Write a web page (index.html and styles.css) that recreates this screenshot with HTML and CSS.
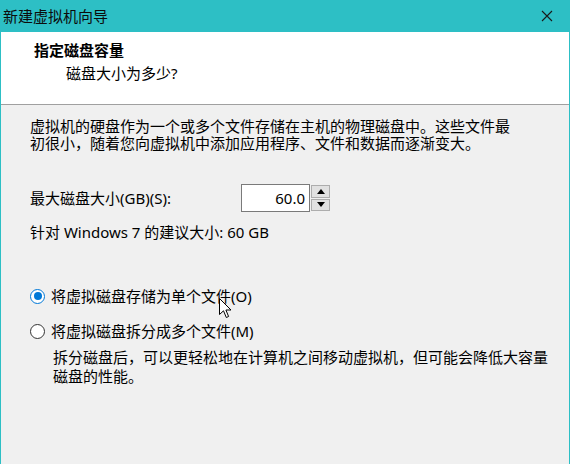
FILE: index.html
```html
<!DOCTYPE html>
<html lang="zh-CN">
<head>
<meta charset="utf-8">
<title>新建虚拟机向导</title>
<link rel="stylesheet" href="styles.css">
</head>
<body>
<div class="window">
  <div class="titlebar">
    <span class="title">新建虚拟机向导</span>
    <span class="close">
      <svg width="12" height="12" viewBox="0 0 12 12"><path d="M1 1 L11 11 M11 1 L1 11" stroke="#1a1a1a" stroke-width="1.1" fill="none"/></svg>
    </span>
  </div>
  <div class="header">
    <div class="h-title">指定磁盘容量</div>
    <div class="h-sub">磁盘大小为多少?</div>
  </div>
  <div class="content">
    <p class="para"><span class="line">虚拟机的硬盘作为一个或多个文件存储在主机的物理磁盘中。这些文件最</span><span class="line">初很小，随着您向虚拟机中添加应用程序、文件和数据而逐渐变大。</span></p>
    <div class="size-row">
      <span class="size-label">最大磁盘大小(GB)(S):</span>
      <div class="spin">
        <div class="spin-input">60.0</div>
        <div class="spin-btns">
          <div class="spin-btn"><svg width="8" height="5" viewBox="0 0 8 5"><path d="M0 5 L4 0 L8 5 Z" fill="#000"/></svg></div>
          <div class="spin-btn"><svg width="8" height="5" viewBox="0 0 8 5"><path d="M0 0 L8 0 L4 5 Z" fill="#000"/></svg></div>
        </div>
      </div>
    </div>
    <div class="recommend">针对 Windows 7 的建议大小: 60 GB</div>
    <div class="radio-row first">
      <span class="radio checked"><span class="dot"></span></span>
      <span class="radio-label">将虚拟磁盘存储为单个文件(O)</span>
      <svg class="cursor" width="13" height="21" viewBox="0 0 13 21"><path d="M0.5 0.5 L0.5 16.5 L4.5 12.8 L7.3 19.5 L9.6 18.5 L6.9 12 L12 12 Z" fill="#fff" stroke="#000" stroke-width="1" stroke-linejoin="miter"/></svg>
    </div>
    <div class="radio-row second">
      <span class="radio"></span>
      <span class="radio-label">将虚拟磁盘拆分成多个文件(M)</span>
    </div>
    <p class="desc"><span class="line">拆分磁盘后，可以更轻松地在计算机之间移动虚拟机，但可能会降低大容量</span><span class="line">磁盘的性能。</span></p>
  </div>
</div>
</body>
</html>
```

FILE: styles.css
```css
* { box-sizing: border-box; }
html, body {
  margin: 0;
  padding: 0;
}
body {
  width: 570px;
  height: 464px;
  overflow: hidden;
  background: #f0f0f0;
  font-family: "Noto Sans", "Noto Sans CJK SC", sans-serif;
  font-size: 15px;
  color: #000;
}
.window {
  width: 570px;
  height: 464px;
  display: flex;
  flex-direction: column;
  border-left: 1px solid #2dbfc5;
  border-right: 1px solid #2dbfc5;
}
.titlebar {
  height: 32px;
  flex: none;
  background: #2dbfc5;
  display: flex;
  align-items: center;
  justify-content: space-between;
  padding-left: 3px;
  margin: 0 -1px;
}
.title {
  line-height: 20px;
  color: #0c0c0c;
}
.close {
  width: 46px;
  height: 32px;
  display: flex;
  align-items: center;
  justify-content: center;
}
.header {
  height: 73px;
  flex: none;
  background: #fff;
  border-bottom: 1px solid #a0a0a0;
  padding: 8px 0 0 33px;
}
.h-title {
  font-weight: bold;
  line-height: 20px;
}
.h-sub {
  line-height: 20px;
  margin-top: 3px;
  padding-left: 32px;
}
.content {
  flex: 1;
  padding: 13px 0 0 29px;
}
.para, .desc {
  margin: 0;
}
.line {
  display: block;
  white-space: nowrap;
}
.para .line { line-height: 17px; }
.size-row {
  margin-top: 32px;
  height: 28px;
  display: flex;
  align-items: center;
}
.size-label {
  width: 211px;
  line-height: 20px;
}
.spin {
  display: flex;
  height: 28px;
}
.spin-input {
  width: 69px;
  height: 28px;
  background: #fff;
  border: 1px solid #7a7a7a;
  text-align: right;
  padding-right: 4px;
  line-height: 26px;
}
.spin-btns {
  width: 20px;
  display: flex;
  flex-direction: column;
  padding: 1px 0 1px 1px;
  gap: 1px;
}
.spin-btn {
  flex: 1;
  background: #e1e1e1;
  border: 1px solid #adadad;
  display: flex;
  align-items: center;
  justify-content: center;
}
.recommend {
  margin-top: 12px;
  line-height: 17px;
}
.radio-row {
  position: relative;
  display: flex;
  align-items: center;
  height: 20px;
}
.radio-row.first { margin-top: 45px; }
.radio-row.second { margin-top: 15px; }
.radio {
  width: 15px;
  height: 15px;
  border-radius: 50%;
  border: 1px solid #333;
  background: #fff;
  display: flex;
  align-items: center;
  justify-content: center;
  margin-right: 6px;
  flex: none;
}
.radio.checked {
  border-color: #0078d7;
}
.dot {
  width: 8px;
  height: 8px;
  border-radius: 50%;
  background: #0078d7;
}
.radio-label { line-height: 20px; }
.cursor {
  position: absolute;
  left: 189px;
  top: 12px;
}
.desc {
  margin-top: 7px;
  padding-left: 23px;
}
.desc .line { line-height: 19px; }
```
